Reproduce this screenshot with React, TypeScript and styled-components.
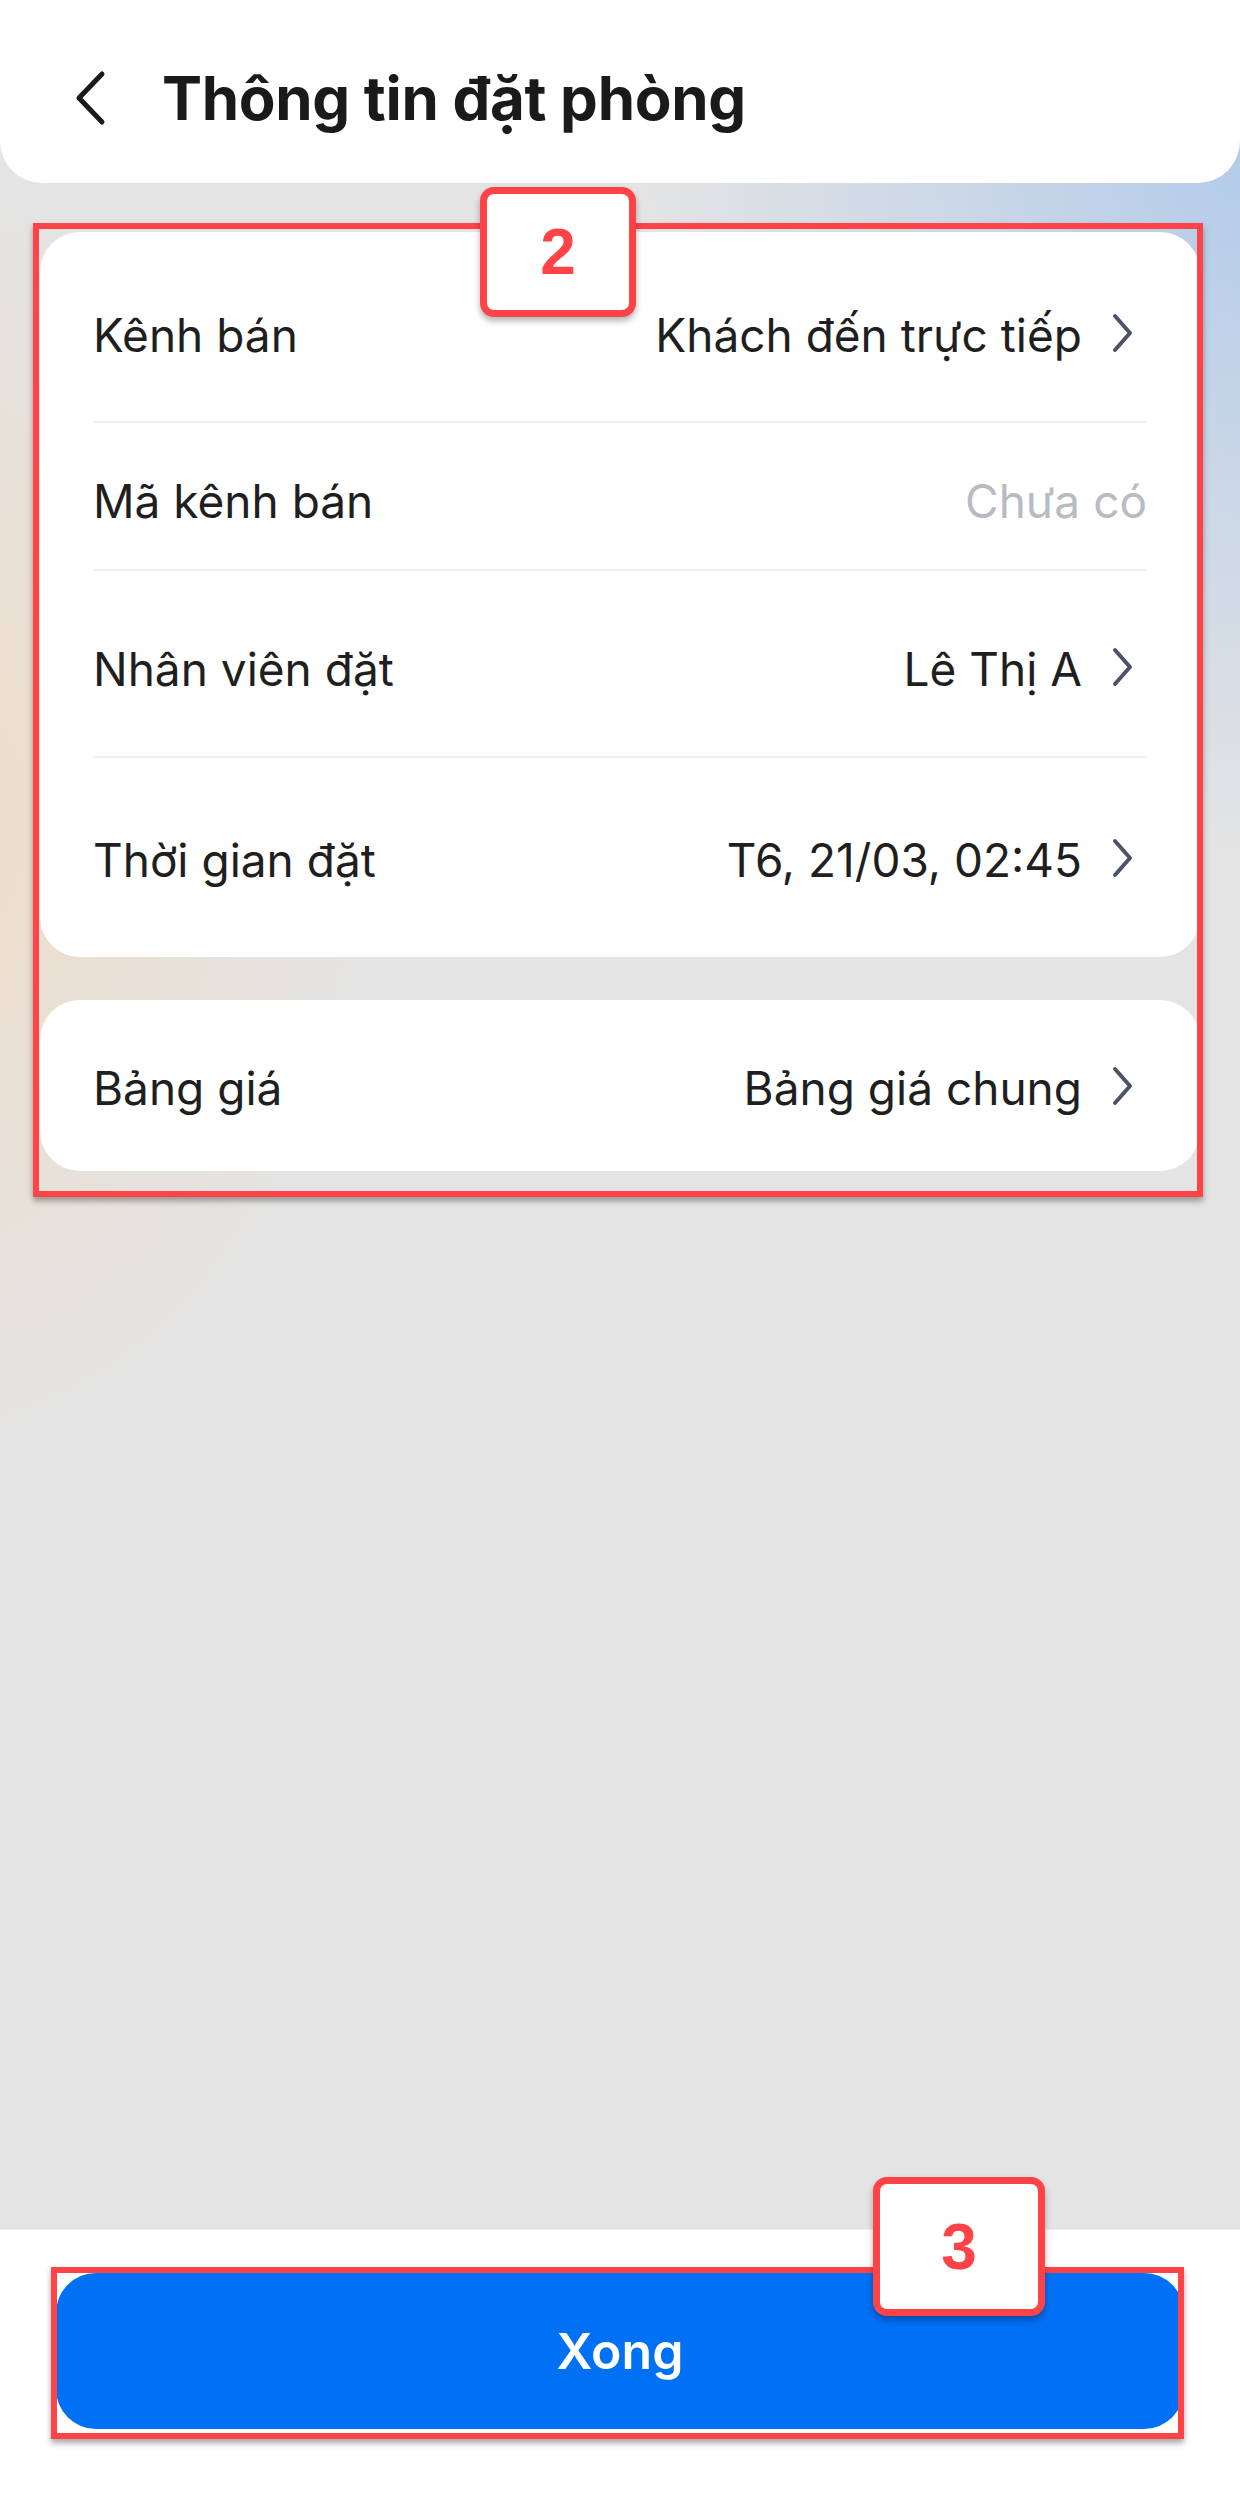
import * as React from 'react';
import styled, { createGlobalStyle } from 'styled-components';

const GlobalStyle = createGlobalStyle`
  html, body {
    margin: 0;
    padding: 0;
  }
  body {
    font-family: Inter, 'Noto Sans', sans-serif;
    color: #1c1c1e;
  }
  * {
    box-sizing: border-box;
  }
`;

const Page = styled.div`
  width: 1240px;
  min-height: 2510px;
  display: flex;
  flex-direction: column;
  background-color: #e4e4e4;
  background-image: radial-gradient(ellipse 620px 720px at 1260px 140px, rgba(178, 203, 234, 1), rgba(178, 203, 234, 0) 100%),
    radial-gradient(ellipse 460px 640px at -80px 820px, rgba(238, 220, 198, 0.95), rgba(238, 220, 198, 0) 100%);
  background-repeat: no-repeat;
`;

const Header = styled.header`
  height: 183px;
  background: #ffffff;
  border-radius: 0 0 42px 42px;
  display: flex;
  align-items: center;
  padding: 12px 0 0 72px;
  gap: 54px;
`;

const BackButton = styled.button`
  border: 0;
  background: none;
  padding: 0;
  width: 36px;
  height: 56px;
  display: flex;
  align-items: center;
  justify-content: center;
`;

const Title = styled.h1`
  margin: 0;
  font-size: 60px;
  font-weight: 700;
  letter-spacing: -0.3px;
  color: #1a1a1a;
`;

const Content = styled.main`
  flex: 1;
  padding: 49px 40px 0;
`;

const Annotated = styled.div`
  position: relative;
  display: flex;
  flex-direction: column;
  gap: 43px;
`;

const Frame = styled.div<{ $top: number; $left: number; $right: number; $bottom: number }>`
  position: absolute;
  top: ${(p) => p.$top}px;
  left: ${(p) => p.$left}px;
  right: ${(p) => p.$right}px;
  bottom: ${(p) => p.$bottom}px;
  border: 6px solid #ff4347;
  box-shadow: 0 4px 6px rgba(0, 0, 0, 0.35);
  pointer-events: none;
`;

const Badge = styled.div<{ $top: number; $left: number; $w: number; $h: number }>`
  position: absolute;
  top: ${(p) => p.$top}px;
  left: ${(p) => p.$left}px;
  width: ${(p) => p.$w}px;
  height: ${(p) => p.$h}px;
  background: #ffffff;
  border: 7px solid #ff4347;
  border-radius: 14px;
  box-shadow: 0 4px 6px rgba(0, 0, 0, 0.3);
  display: flex;
  align-items: center;
  justify-content: center;
  font-family: 'Liberation Sans', Arial, sans-serif;
  font-weight: 700;
  font-size: 64px;
  color: #ff4347;
`;

const Card = styled.section`
  background: #ffffff;
  border-radius: 40px;
  padding: 0 53px;
`;

const Row = styled.div<{ $height: number; $offset: number; $divider?: boolean }>`
  height: ${(p) => p.$height}px;
  padding-top: ${(p) => p.$offset}px;
  display: flex;
  align-items: center;
  justify-content: space-between;
  border-bottom: ${(p) => (p.$divider ? '2px solid #efefef' : '0')};
`;

const Label = styled.span`
  font-size: 46px;
  color: #1f1f1f;
`;

const ValueWrap = styled.div`
  display: flex;
  align-items: center;
  gap: 17px;
`;

const Value = styled.span<{ $muted?: boolean }>`
  font-size: 46px;
  color: ${(p) => (p.$muted ? '#b8bcc2' : '#1f1f1f')};
`;

const ChevronBox = styled.span`
  width: 48px;
  height: 48px;
  display: flex;
  align-items: center;
  justify-content: center;
  margin-top: -4px;
`;

const Footer = styled.footer`
  height: 281px;
  background: #ffffff;
  border-top: 1px solid #eeeeee;
  padding: 43px 56px 0;
`;

const ButtonWrap = styled.div`
  position: relative;
`;

const DoneButton = styled.button`
  width: 100%;
  height: 156px;
  border: 0;
  border-radius: 40px;
  background: #0070f5;
  color: #ffffff;
  font-family: Inter, 'Noto Sans', sans-serif;
  font-size: 50px;
  font-weight: 600;
`;

function Chevron() {
  return (
    <ChevronBox>
      <svg width="24" height="42" viewBox="0 0 24 42" fill="none">
        <path d="M4 4 L19 21 L4 38" stroke="#4a5466" strokeWidth="4" strokeLinecap="round" strokeLinejoin="round" />
      </svg>
    </ChevronBox>
  );
}

interface InfoRowProps {
  label: string;
  value: string;
  height: number;
  offset: number;
  divider?: boolean;
  muted?: boolean;
  arrow?: boolean;
}

function InfoRow({ label, value, height, offset, divider, muted, arrow = true }: InfoRowProps) {
  return (
    <Row $height={height} $offset={offset} $divider={divider}>
      <Label>{label}</Label>
      <ValueWrap>
        <Value $muted={muted}>{value}</Value>
        {arrow && <Chevron />}
      </ValueWrap>
    </Row>
  );
}

function App() {
  return (
    <Page>
      <GlobalStyle />
      <Header>
        <BackButton>
          <svg width="34" height="56" viewBox="0 0 34 56" fill="none">
            <path d="M29 4 L6 28 L29 52" stroke="#1a1a1a" strokeWidth="5" strokeLinecap="round" strokeLinejoin="round" />
          </svg>
        </BackButton>
        <Title>Thông tin đặt phòng</Title>
      </Header>
      <Content>
        <Annotated>
          <Card>
            <InfoRow label="Kênh bán" value="Khách đến trực tiếp" height={191} offset={16} divider />
            <InfoRow label="Mã kênh bán" value="Chưa có" height={148} offset={10} divider muted arrow={false} />
            <InfoRow label="Nhân viên đặt" value="Lê Thị A" height={187} offset={10} divider />
            <InfoRow label="Thời gian đặt" value="T6, 21/03, 02:45" height={199} offset={4} />
          </Card>
          <Card>
            <InfoRow label="Bảng giá" value="Bảng giá chung" height={171} offset={4} />
          </Card>
          <Frame $top={-9} $left={-7} $right={-3} $bottom={-26} />
          <Badge $top={-45} $left={440} $w={156} $h={130}>
            2
          </Badge>
        </Annotated>
      </Content>
      <Footer>
        <ButtonWrap>
          <DoneButton>Xong</DoneButton>
          <Frame $top={-6} $left={-5} $right={0} $bottom={-10} />
          <Badge $top={-96} $left={817} $w={172} $h={139}>
            3
          </Badge>
        </ButtonWrap>
      </Footer>
    </Page>
  );
}

export default App;
